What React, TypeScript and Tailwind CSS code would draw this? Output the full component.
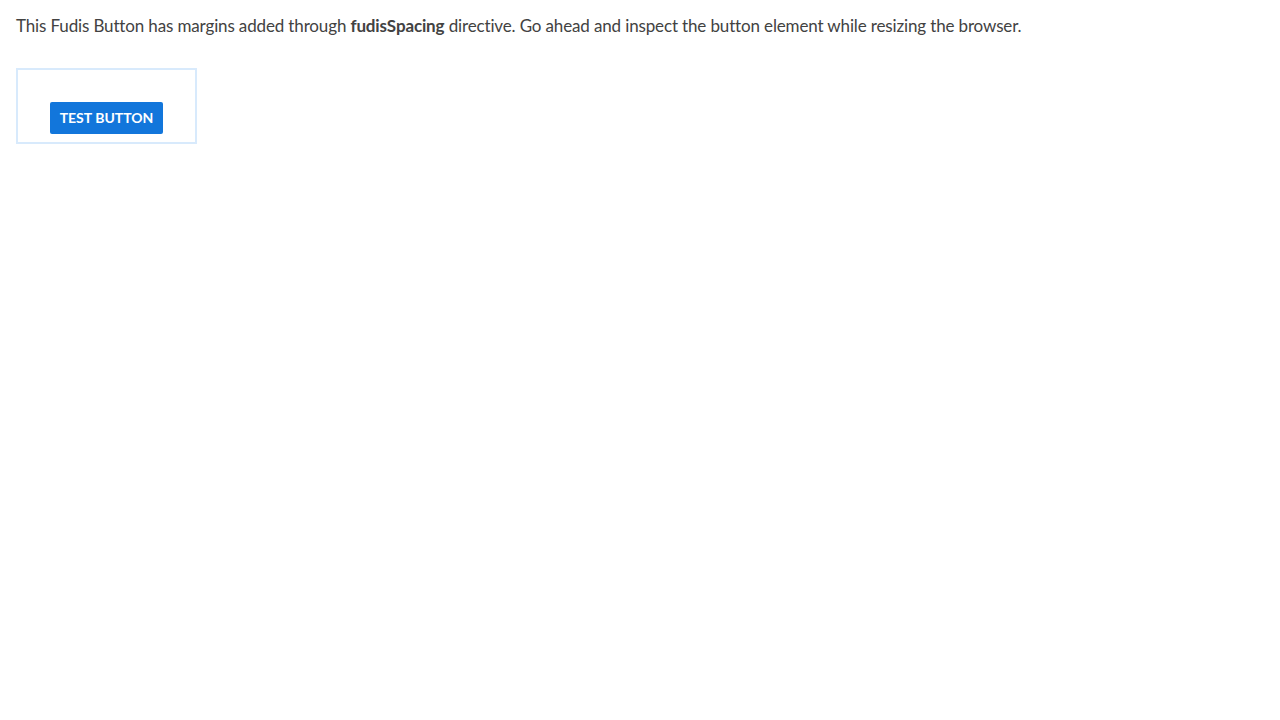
export default function App() {
  return (
    <div className="p-4 font-['Lato','Noto_Sans',sans-serif] text-[#424242]">
      <p className="text-[17px] leading-[18px] mt-[1px] mb-[33px] tracking-[-0.14px]">
        This Fudis Button has margins added through <b className="font-bold">fudisSpacing</b>{" "}
        directive. Go ahead and inspect the button element while resizing the browser.
      </p>
      <div className="inline-block border-2 border-[#d8eafc]">
        <button className="mt-8 mx-8 mb-2 block h-[32px] w-[113px] rounded-[2px] bg-[#1276db] text-white text-[14px] font-bold uppercase tracking-[0px] leading-none">
          Test button
        </button>
      </div>
    </div>
  );
}
